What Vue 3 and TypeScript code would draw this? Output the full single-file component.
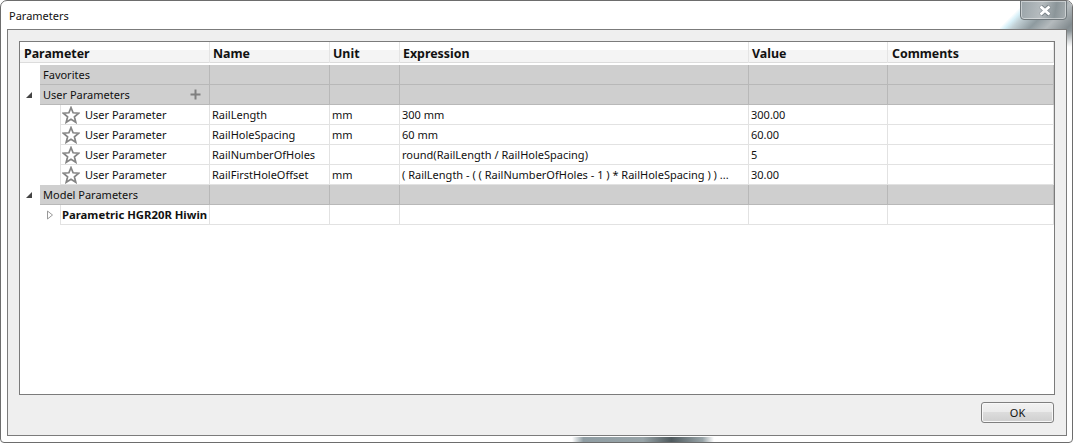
<script setup lang="ts">
interface Row {
  kind: 'group' | 'param' | 'model'
  label: string
  name?: string
  unit?: string
  expr?: string
  value?: string
  arrow?: boolean
  plus?: boolean
}
const columns = ['Parameter', 'Name', 'Unit', 'Expression', 'Value', 'Comments']
const rows: Row[] = [
  { kind: 'group', label: 'Favorites' },
  { kind: 'group', label: 'User Parameters', arrow: true, plus: true },
  { kind: 'param', label: 'User Parameter', name: 'RailLength', unit: 'mm', expr: '300 mm', value: '300.00' },
  { kind: 'param', label: 'User Parameter', name: 'RailHoleSpacing', unit: 'mm', expr: '60 mm', value: '60.00' },
  { kind: 'param', label: 'User Parameter', name: 'RailNumberOfHoles', unit: '', expr: 'round(RailLength / RailHoleSpacing)', value: '5' },
  { kind: 'param', label: 'User Parameter', name: 'RailFirstHoleOffset', unit: 'mm', expr: '( RailLength - ( ( RailNumberOfHoles - 1 ) * RailHoleSpacing ) ) ...', value: '30.00' },
  { kind: 'group', label: 'Model Parameters', arrow: true },
  { kind: 'model', label: 'Parametric HGR20R Hiwin' }
]
</script>

<template>
  <div class="window">
    <div class="titlebar">
      <span class="title">Parameters</span>
      <div class="close">
        <svg width="14" height="11" viewBox="0 0 14 11">
          <path d="M2.5 1 L11.5 10 M11.5 1 L2.5 10" stroke="#59636a" stroke-width="4.4" fill="none" opacity="0.55" />
          <path d="M2.5 1.5 L11.5 9.5 M11.5 1.5 L2.5 9.5" stroke="#fff" stroke-width="3" fill="none" />
        </svg>
      </div>
    </div>
    <div class="panel">
      <div class="table">
        <div class="head">
          <div v-for="c in columns" :key="c" class="hcell">{{ c }}</div>
        </div>
        <div v-for="(r, i) in rows" :key="i" class="row" :class="r.kind">
          <div class="first">
            <span class="gutter">
              <svg v-if="r.arrow" width="8" height="8" viewBox="0 0 8 8"><path d="M7 1 V7 H1 Z" fill="#444" /></svg>
            </span>
            <span v-if="r.kind === 'model'" class="gutter2">
              <svg width="8" height="10" viewBox="0 0 8 10"><path d="M1.5 1 L6.5 5 L1.5 9 Z" fill="#fff" stroke="#999" /></svg>
            </span>
            <div class="label">
              <svg v-if="r.kind === 'param'" class="star" width="18" height="18" viewBox="0 0 18 18">
                <path d="M9 1.6 L11.1 6.8 L16.7 7.2 L12.4 10.8 L13.8 16.3 L9 13.3 L4.2 16.3 L5.6 10.8 L1.3 7.2 L6.9 6.8 Z" fill="#fff" stroke="#858585" stroke-width="1.7" />
              </svg>
              <span class="label-text">{{ r.label }}</span>
              <svg v-if="r.plus" class="plus" width="11" height="11" viewBox="0 0 11 11"><path d="M5.5 0.5 V10.5 M0.5 5.5 H10.5" stroke="#7f7f7f" stroke-width="2" /></svg>
            </div>
          </div>
          <div class="cell">{{ r.name }}</div>
          <div class="cell">{{ r.unit }}</div>
          <div class="cell">{{ r.expr }}</div>
          <div class="cell">{{ r.value }}</div>
          <div class="cell"></div>
        </div>
      </div>
      <div class="footer">
        <button class="ok" type="button">OK</button>
      </div>
    </div>
    <div class="glass-corner"></div>
    <div class="glass-bottom"></div>
  </div>
</template>

<style>
html, body { margin: 0; padding: 0; background: #fff; }
</style>

<style scoped>
.window {
  position: relative;
  box-sizing: border-box;
  width: 1073px;
  height: 443px;
  padding: 0 5px 6px 6px;
  display: flex;
  flex-direction: column;
  background: #fff;
  border: 1px solid #6d6d6d;
  border-radius: 7px 7px 4px 4px;
  font-family: "Noto Sans", sans-serif;
  font-size: 11px;
  color: #111;
  overflow: hidden;
}
.titlebar {
  height: 28px;
  flex: none;
  display: flex;
  justify-content: space-between;
}
.title { margin: 8px 0 0 2px; font-size: 11px; line-height: 14px; }
.close {
  position: relative;
  z-index: 2;
  box-sizing: border-box;
  width: 47px;
  height: 20px;
  margin: -1px 0 0 0;
  border: 1px solid #6f777b;
  border-radius: 0 0 4px 4px;
  box-shadow: inset 0 0 0 1px rgba(255, 255, 255, 0.45);
  background: linear-gradient(100deg, #9aa4a9, #b6bcbf 45%, #8b9599 75%, #a7aeb1);
  display: flex;
  align-items: center;
  justify-content: center;
  padding-left: 3px;
}
.panel {
  flex: 1;
  box-sizing: border-box;
  display: flex;
  flex-direction: column;
  border: 1px solid #7b7b7b;
  background: #efefef;
  padding: 11px 11px 11px 11px;
  position: relative;
  z-index: 1;
}
.table {
  flex: 1;
  box-sizing: border-box;
  border: 1px solid #7b7b7b;
  background: #fff;
}
.head, .row {
  display: grid;
  grid-template-columns: 190px 120px 70px 349px 139px 1fr;
}
.head {
  height: 23px;
  background: linear-gradient(#fff 0, #fff 8px, #f4f4f4 8px, #f4f4f4 20px, #dcdcdc 20px, #dcdcdc 21px, #fff 21px);
}
.hcell {
  box-sizing: border-box;
  padding: 4px 0 0 3px;
  line-height: 16px;
  height: 21px;
  font-weight: 700;
  font-size: 12.4px;
  border-right: 1px solid #e4e4e4;
}
.hcell:first-child { padding-left: 4px; }
.hcell:last-child { padding-left: 4px; }
.row { height: 20px; box-sizing: border-box; }
.first { display: flex; min-width: 0; }
.gutter { width: 20px; flex: none; display: flex; align-items: center; justify-content: center; padding-right: 2px; box-sizing: border-box; }
.gutter2 { width: 20px; flex: none; display: flex; align-items: center; justify-content: flex-end; padding-right: 6px; box-sizing: border-box; }
.label {
  flex: 1;
  min-width: 0;
  display: flex;
  align-items: center;
  box-sizing: border-box;
  white-space: nowrap;
  overflow: hidden;
  border-bottom: 1px solid #e2e2e2;
  border-right: 1px solid #e2e2e2;
}
.cell {
  box-sizing: border-box;
  padding-left: 2px;
  line-height: 19px;
  white-space: nowrap;
  overflow: hidden;
  border-bottom: 1px solid #e2e2e2;
  border-right: 1px solid #e2e2e2;
}
.group .label, .group .cell {
  background: #cfcfcf;
  border-color: #b8b8b8;
}
.group .label-text { padding-left: 3px; }
.plus { position: absolute; left: 182px; }
.param .first .gutter { width: 40px; }
.param .label { padding-left: 1px; border-left: 1px solid #e2e2e2; }
.star { flex: none; }
.param .label-text { margin-left: 5px; }
.model .gutter { display: none; }
.model .gutter2 { width: 40px; }
.model .label { border-left: 1px solid #e2e2e2; padding-left: 1px; }
.model .label-text { font-weight: 700; font-size: 11.3px; }
.footer { flex: none; display: flex; justify-content: flex-end; padding: 7px 1px 1px 0; }
.ok {
  box-sizing: border-box;
  width: 73px;
  height: 21px;
  padding: 0;
  border: 1px solid #7f7f7f;
  border-radius: 3px;
  background: linear-gradient(#f2f2f2, #ebebeb 45%, #dcdcdc 50%, #cfcfcf);
  box-shadow: inset 0 0 0 1px #f8f8f8;
  font: inherit;
  font-size: 11px;
  color: #111;
}
.glass-corner {
  position: absolute;
  right: 0;
  top: 0;
  width: 72px;
  height: 46px;
  background: linear-gradient(135deg, transparent 22%, #d8f0f8 27%, #c2d0d5 33%, #8e9a9f 48%, #b4babd 62%, #838c90 80%, #a9afb2 100%);
  -webkit-mask-image: linear-gradient(to bottom, #000 65%, transparent 100%);
  mask-image: linear-gradient(to bottom, #000 65%, transparent 100%);
}
.glass-bottom {
  position: absolute;
  left: 571px;
  bottom: 0;
  width: 142px;
  height: 5px;
  background: linear-gradient(90deg, #fff 0, #8f9da3 8%, #98a4a8 50%, #4f5a5e 70%, #98a4a8 92%, #fff 100%);
}
</style>
